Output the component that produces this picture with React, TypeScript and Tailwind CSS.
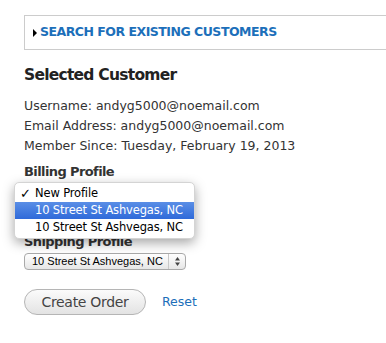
import React from "react";

const lucida = { fontFamily: '"DejaVu Sans", "Lucida Grande", sans-serif' };

function UpDownArrows() {
  return (
    <svg width="7" height="11" viewBox="0 0 7 11" className="text-[#444]">
      <path d="M3.5 1 L6 4.5 H1 Z" fill="currentColor" />
      <path d="M3.5 10 L6 6.5 H1 Z" fill="currentColor" />
    </svg>
  );
}

export default function App() {
  return (
    <div className="min-h-[343px] w-[386px] overflow-hidden bg-white pl-[24px] pt-[15px] text-[#333]" style={lucida}>
      {/* Collapsible search panel */}
      <div className="flex h-[35px] w-[400px] items-center border border-r-0 border-[#cccccc] pl-[8px]">
        <svg width="4" height="8" viewBox="0 0 4 8" className="mr-[3px]">
          <path d="M0 0 L4 4 L0 8 Z" fill="#000" />
        </svg>
        <span className="whitespace-nowrap text-[12.5px] font-bold tracking-[-0.5px] text-[#1c6fba]">SEARCH FOR EXISTING CUSTOMERS</span>
      </div>

      {/* Selected customer */}
      <h2 className="mt-[14px] whitespace-nowrap text-[15.5px] leading-[22px] font-bold tracking-[-0.75px] text-[#222]">Selected Customer</h2>
      <div className="mt-[10px] whitespace-nowrap text-[12.5px] leading-[20px] text-[#333]">
        <p>Username: andyg5000@noemail.com</p>
        <p>Email Address: andyg5000@noemail.com</p>
        <p>Member Since: Tuesday, February 19, 2013</p>
      </div>

      {/* Billing: select with its open option list */}
      <h3 className="mt-[7px] whitespace-nowrap text-[13px] leading-[18px] font-bold tracking-[-0.6px] text-[#333]">Billing Profile</h3>
      <div className="relative h-[52px]">
        <div
          className="absolute left-[-10px] top-[1px] z-10 w-[181px] rounded-[5px] border border-[#d4d4d4] bg-white py-[2px] text-[11.5px] leading-[17px] tracking-[-0.15px] whitespace-nowrap text-black shadow-[0_4px_12px_rgba(0,0,0,0.35)]"
          style={lucida}
        >
          <div className="flex items-center">
            <span className="w-[20px] pl-[5px] text-[13px]">✓</span>
            <span>New Profile</span>
          </div>
          <div className="flex items-center bg-gradient-to-b from-[#5a8ee6] to-[#2f6ad9] text-white">
            <span className="w-[20px]" />
            <span>10 Street St Ashvegas, NC</span>
          </div>
          <div className="flex items-center">
            <span className="w-[20px]" />
            <span>10 Street St Ashvegas, NC</span>
          </div>
        </div>
      </div>

      {/* Shipping */}
      <h3 className="whitespace-nowrap text-[13px] leading-[18px] font-bold tracking-[-0.6px] text-[#333]">Shipping Profile</h3>
      <div
        className="mt-[2px] flex h-[17px] w-[162px] items-center rounded-[4px] border border-[#a9a9a9] bg-gradient-to-b from-white to-[#e6e6e6] text-[11px] whitespace-nowrap text-black"
        style={{ fontFamily: '"Liberation Sans", Arial, sans-serif' }}
      >
        <span className="flex-1 pl-[7px]">10 Street St Ashvegas, NC</span>
        <span className="flex h-full w-[17px] items-center justify-center border-l border-[#c8c8c8]">
          <UpDownArrows />
        </span>
      </div>

      {/* Actions */}
      <div className="mt-[19px] flex items-center gap-[16px]">
        <button
          className="h-[26px] w-[122px] rounded-full border border-[#b5b5b5] bg-gradient-to-b from-[#fbfbfb] to-[#e3e3e3] text-[14px] tracking-[-0.3px] text-[#444]"
          style={lucida}
        >
          Create Order
        </button>
        <a href="#" className="text-[12.5px] text-[#1c6fba]">Reset</a>
      </div>
    </div>
  );
}
